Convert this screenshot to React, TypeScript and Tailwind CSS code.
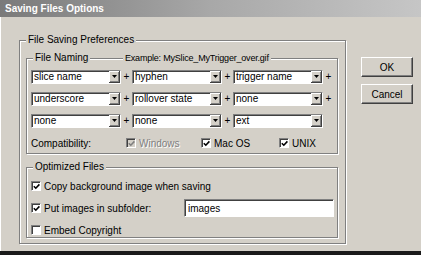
import React from "react";

const face = "bg-[#d4d0c8]";
const sunken =
  "border border-t-[#808080] border-l-[#808080] border-b-white border-r-white shadow-[inset_1px_1px_0_#404040]";

function GroupBox({
  label,
  className,
  children,
  extra,
}: {
  label: string;
  className: string;
  children?: React.ReactNode;
  extra?: React.ReactNode;
}) {
  return (
    <div className={`relative border border-[#808080] shadow-[inset_1px_1px_0_#fff,1px_1px_0_#fff] ${className}`}>
      <span className={`absolute left-[6px] top-[-7px] px-[2px] leading-[12px] ${face}`}>{label}</span>
      {extra}
      {children}
    </div>
  );
}

function Combo({ value }: { value: string }) {
  return (
    <div className={`w-[90px] h-[14px] bg-white flex items-stretch ${sunken}`}>
      <span className="flex-1 pl-[2px] leading-[12px] whitespace-nowrap overflow-hidden">{value}</span>
      <span
        className={`w-[11px] flex items-center justify-center border-r border-b border-[#404040] shadow-[inset_1px_1px_0_#fff,inset_-1px_-1px_0_#808080] ${face}`}
      >
        <svg width="5" height="3" viewBox="0 0 5 3">
          <path d="M0 0h5L2.5 3z" fill="#000" />
        </svg>
      </span>
    </div>
  );
}

function Check({ checked, disabled }: { checked?: boolean; disabled?: boolean }) {
  return (
    <span
      className={`w-[10px] h-[10px] shrink-0 flex items-center justify-center ${sunken} ${disabled ? face : "bg-white"}`}
    >
      {checked && (
        <svg width="7" height="7" viewBox="0 0 7 7">
          <path d="M0.8 3.2l2 2 3.6-3.8" stroke={disabled ? "#808080" : "#000"} strokeWidth="1.6" fill="none" />
        </svg>
      )}
    </span>
  );
}

function Plus() {
  return <span className="w-[11px] text-center leading-[14px]">+</span>;
}

function Btn({ children }: { children: React.ReactNode }) {
  return (
    <button
      type="button"
      className={`w-[52px] h-[20px] flex items-center justify-center border border-t-white border-l-white border-b-[#404040] border-r-[#404040] shadow-[inset_-1px_-1px_0_#808080] ${face}`}
    >
      {children}
    </button>
  );
}

const rows = [
  ["slice name", "hyphen", "trigger name"],
  ["underscore", "rollover state", "none"],
  ["none", "none", "ext"],
];

export default function App() {
  return (
    <div
      className={`w-[421px] h-[255px] flex flex-col overflow-hidden text-[10px] text-black font-['Liberation_Sans',Arial,sans-serif] ${face}`}
    >
      <div className="h-[17px] shrink-0 flex items-center pl-[5px] font-bold text-white bg-linear-to-r from-[#7a7a7a] via-[#a8a8a8] to-[#c6c6c6]">
        Saving Files Options
      </div>

      <div className="flex-1 flex pl-[18px] pt-[23px] border-l border-white">
        <GroupBox label="File Saving Preferences" className="w-[327px] h-[204px] pt-[17px] pl-[6px]">
          <GroupBox
            label="File Naming"
            className="w-[312px] h-[96px] pt-[11px] pl-[4px]"
            extra={
              <span className={`absolute left-[96px] top-[-6px] px-[2px] text-[9px] tracking-[-0.2px] leading-[11px] ${face}`}>
                Example: MySlice_MyTrigger_over.gif
              </span>
            }
          >
            <div className="flex flex-col gap-[8px]">
              {rows.map((r, i) => (
                <div key={i} className="flex items-center">
                  <Combo value={r[0]} />
                  <Plus />
                  <Combo value={r[1]} />
                  <Plus />
                  <Combo value={r[2]} />
                  {i < 2 && <Plus />}
                </div>
              ))}
            </div>
            <div className="flex items-center h-[12px] mt-[9px]">
              <span className="w-[95px]">Compatibility:</span>
              <span className="w-[75px] flex items-center gap-[3px]">
                <Check checked disabled />
                <span className="text-[#808080] [text-shadow:1px_1px_0_#fff]">Windows</span>
              </span>
              <span className="w-[78px] flex items-center gap-[3px]">
                <Check checked />
                <span>Mac OS</span>
              </span>
              <span className="flex items-center gap-[3px]">
                <Check checked />
                <span>UNIX</span>
              </span>
            </div>
          </GroupBox>

          <GroupBox label="Optimized Files" className="w-[312px] h-[71px] mt-[13px] pt-[11px] pl-[4px]">
            <div className="flex items-center gap-[3px] h-[14px]">
              <Check checked />
              <span>Copy background image when saving</span>
            </div>
            <div className="flex items-center h-[18px] mt-[6px]">
              <span className="flex-1 flex items-center gap-[3px]">
                <Check checked />
                <span>Put images in subfolder:</span>
              </span>
              <div className={`w-[150px] h-[18px] mr-[3px] bg-white flex items-center pl-[3px] ${sunken}`}>images</div>
            </div>
            <div className="flex items-center gap-[3px] h-[12px] mt-[7px]">
              <Check />
              <span>Embed Copyright</span>
            </div>
          </GroupBox>
        </GroupBox>

        <div className="ml-[15px] mt-[17px] flex flex-col gap-[7px]">
          <Btn>OK</Btn>
          <Btn>Cancel</Btn>
        </div>
      </div>

      <div className="h-[4px] shrink-0 bg-[#1a1a1a]" />
    </div>
  );
}
